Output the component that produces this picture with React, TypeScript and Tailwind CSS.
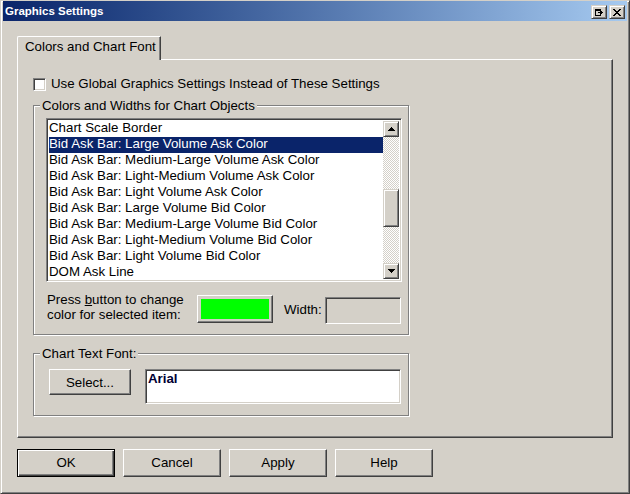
import { useState } from "react";

// classic 3D edges
const raised =
  "border border-t-white border-l-white border-r-[#404040] border-b-[#404040] shadow-[inset_-1px_-1px_#808080]";
const raisedSmall =
  "border border-t-[#d4d0c8] border-l-[#d4d0c8] border-r-[#404040] border-b-[#404040] shadow-[inset_1px_1px_#fff,inset_-1px_-1px_#808080]";
const sunken =
  "border border-t-[#808080] border-l-[#808080] border-r-white border-b-white shadow-[inset_1px_1px_#404040,inset_-1px_-1px_#d4d0c8]";
const etched = "border border-[#808080] shadow-[inset_1px_1px_#fff,1px_1px_#fff]";

const chartObjects = [
  "Chart Scale Border",
  "Bid Ask Bar: Large Volume Ask Color",
  "Bid Ask Bar: Medium-Large Volume Ask Color",
  "Bid Ask Bar: Light-Medium Volume Ask Color",
  "Bid Ask Bar: Light Volume Ask Color",
  "Bid Ask Bar: Large Volume Bid Color",
  "Bid Ask Bar: Medium-Large Volume Bid Color",
  "Bid Ask Bar: Light-Medium Volume Bid Color",
  "Bid Ask Bar: Light Volume Bid Color",
  "DOM Ask Line",
];

function CloseGlyph() {
  return (
    <svg width="8" height="7" viewBox="0 0 8 7" shapeRendering="crispEdges">
      <path
        fill="#000"
        d="M0 0h2v1H0zM6 0h2v1H6zM1 1h2v1H1zM5 1h2v1H5zM2 2h4v1H2zM3 3h2v1H3zM2 4h4v1H2zM1 5h2v1H1zM5 5h2v1H5zM0 6h2v1H0zM6 6h2v1H6z"
      />
    </svg>
  );
}

function DockGlyph() {
  return (
    <svg width="8" height="7" viewBox="0 0 8 7" shapeRendering="crispEdges">
      <path
        fill="#000"
        d="M0 0h6v2H0zM0 2h1v5H0zM5 2h1v1H5zM5 5h1v1H5zM0 6h6v1H0zM3 3h5v1H3zM5 4h2v1H5zM5 2h2v1H5z"
      />
    </svg>
  );
}

function Arrow({ down }: { down?: boolean }) {
  return (
    <svg width="7" height="4" viewBox="0 0 7 4" shapeRendering="crispEdges">
      <path
        fill="#000"
        d={down ? "M0 0h7v1H0zM1 1h5v1H1zM2 2h3v1H2zM3 3h1v1H3z" : "M3 0h1v1H3zM2 1h3v1H2zM1 2h5v1H1zM0 3h7v1H0z"}
      />
    </svg>
  );
}

function GroupBox({ title, className, children }: { title: string; className: string; children: React.ReactNode }) {
  return (
    <div className={`${etched} ${className}`}>
      <div className="-mt-[8px] ml-[6px] w-fit bg-[#d4d0c8] px-[2px] h-[15px] leading-[15px]">{title}</div>
      {children}
    </div>
  );
}

export default function App() {
  const [selected, setSelected] = useState(1);
  const [useGlobal, setUseGlobal] = useState(false);

  return (
    <div className="w-[630px] h-[494px] overflow-hidden bg-[#d4d0c8] text-black text-[13.3px] font-['Liberation_Sans',Arial,sans-serif] border border-t-[#d4d0c8] border-l-[#d4d0c8] border-r-[#404040] border-b-[#404040] shadow-[inset_1px_1px_#fff,inset_-1px_-1px_#808080] px-[2px] flex flex-col">
      {/* title bar */}
      <div className="h-[20px] shrink-0 flex items-center bg-linear-to-r from-[#0a246a] to-[#a6caf0] pl-[2px] pr-[2px]">
        <span className="flex-1 text-white font-bold text-[11.5px] leading-[14px]">Graphics Settings</span>
        <div className="flex gap-[2px] mt-[2px]">
          <button className={`${raisedSmall} w-[16px] h-[14px] bg-[#d4d0c8] flex items-center justify-center`}>
            <DockGlyph />
          </button>
          <button className={`${raisedSmall} w-[16px] h-[14px] bg-[#d4d0c8] flex items-center justify-center`}>
            <CloseGlyph />
          </button>
        </div>
      </div>

      <div className="pl-[14px] pt-[15px]">
        {/* tab */}
        <div className="relative z-10 w-[144px] h-[24px] bg-[#d4d0c8] border-t border-l border-r border-t-white border-l-white border-r-[#404040] shadow-[inset_-1px_0_#808080] rounded-tl-[2px] pl-[7px] pt-[2px] leading-[15px]">
          Colors and Chart Font
        </div>

        {/* tab page */}
        <div className="-mt-[1px] w-[596px] h-[379px] border border-t-white border-l-white border-r-[#404040] border-b-[#404040] shadow-[inset_-1px_-1px_#808080] pl-[15px] pt-[18px]">
          <label className="flex items-start gap-[5px] h-[13px] cursor-default">
            <span
              onClick={() => setUseGlobal(!useGlobal)}
              className={`${sunken} w-[13px] h-[13px] bg-white shrink-0 flex items-center justify-center`}
            >
              {useGlobal && <span className="text-[10px] leading-none">✓</span>}
            </span>
            <span className="-mt-[2px] leading-[15px]">Use Global Graphics Settings Instead of These Settings</span>
          </label>

          <GroupBox title="Colors and Widths for Chart Objects" className="mt-[14px] w-[376px] h-[230px]">
            <div className={`${sunken} mt-[5px] ml-[12px] w-[356px] h-[164px] bg-white flex p-[2px]`}>
              <div className="flex-1">
                {chartObjects.map((name, i) => (
                  <div
                    key={name}
                    onClick={() => setSelected(i)}
                    className={`h-[16px] leading-[14px] whitespace-nowrap ${
                      i === selected ? "bg-[#0a246a] text-white" : ""
                    }`}
                  >
                    {name}
                  </div>
                ))}
              </div>
              <div className="w-[16px] flex flex-col bg-[repeating-conic-gradient(#fff_0_25%,#d4d0c8_0_50%)] bg-[length:2px_2px]">
                <div className={`${raisedSmall} h-[16px] bg-[#d4d0c8] flex items-center justify-center`}>
                  <Arrow />
                </div>
                <div className="flex-1 pt-[52px]">
                  <div className={`${raisedSmall} h-[38px] bg-[#d4d0c8]`} />
                </div>
                <div className={`${raisedSmall} h-[16px] bg-[#d4d0c8] flex items-center justify-center`}>
                  <Arrow down />
                </div>
              </div>
            </div>

            <div className="mt-[10px] ml-[13px] flex items-start">
              <div className="w-[150px] leading-[15px]">
                Press <span className="underline">b</span>utton to change
                <br />
                color for selected item:
              </div>
              <button className={`${raised} mt-[3px] w-[76px] h-[28px] bg-[#d4d0c8] p-[3px]`}>
                <div className="w-full h-full bg-[#00ff00]" />
              </button>
              <div className="mt-[10px] w-[52px] pl-[11px] leading-[15px]">Width:</div>
              <div className={`${sunken} mt-[5px] w-[76px] h-[27px] bg-[#d4d0c8]`} />
            </div>
          </GroupBox>

          <GroupBox title="Chart Text Font:" className="mt-[18px] w-[376px] h-[63px]">
            <div className="mt-[8px] ml-[15px] flex items-start">
              <button className={`${raised} w-[82px] h-[26px] bg-[#d4d0c8] leading-[15px]`}>Select...</button>
              <div className={`${sunken} ml-[14px] w-[256px] h-[35px] bg-white pl-[2px] pt-[2px] font-bold leading-[13px] text-[#000033]`}>
                Arial
              </div>
            </div>
          </GroupBox>
        </div>

        {/* dialog buttons */}
        <div className="mt-[11px] flex gap-[8px]">
          <button className="w-[98px] h-[28px] bg-[#d4d0c8] border border-black shadow-[inset_1px_1px_#fff,inset_-1px_-1px_#404040,inset_-2px_-2px_#808080]">
            OK
          </button>
          {["Cancel", "Apply", "Help"].map((label) => (
            <button key={label} className={`${raised} w-[98px] h-[28px] bg-[#d4d0c8]`}>
              {label}
            </button>
          ))}
        </div>
      </div>
    </div>
  );
}
